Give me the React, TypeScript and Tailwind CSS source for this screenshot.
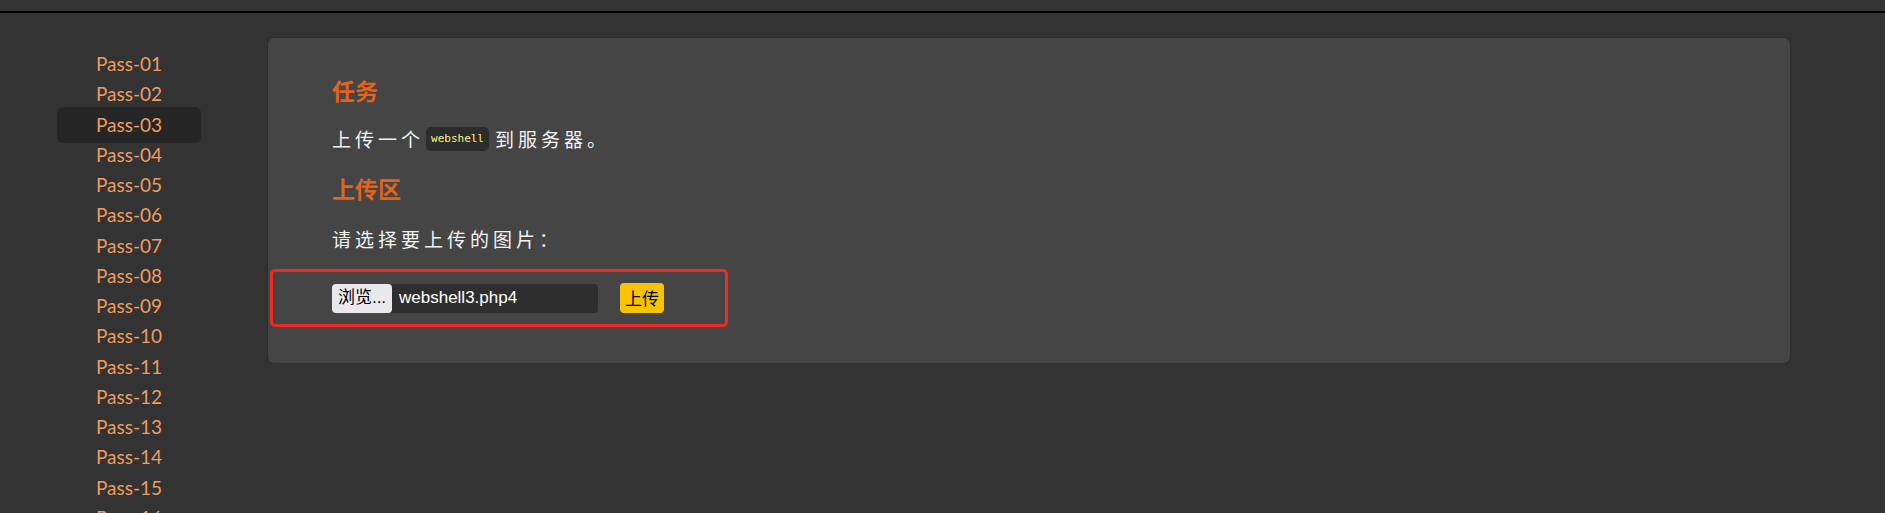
import React from "react";

const passes = Array.from({ length: 21 }, (_, i) => `Pass-${String(i + 1).padStart(2, "0")}`);

const cjk = "font-['Noto_Sans_CJK_SC',sans-serif]";

const App: React.FC = () => {
  return (
    <div className="h-[513px] overflow-hidden bg-[#333333]">
      <div className="h-[13px] border-b-2 border-black bg-[#343434]" />
      <div className="flex items-start">
        {/* sidebar */}
        <ul className="ml-[57px] mt-[36px] w-[144px] font-['Lato',sans-serif] text-[19px]">
          {passes.map((p) => {
            const active = p === "Pass-03";
            return (
              <li
                key={p}
                className={
                  active
                    ? "-my-[3px] rounded-md bg-[#262626] py-[3px] pl-[39px] leading-[30.25px] text-[#ee9c60]"
                    : "pl-[39px] leading-[30.25px] text-[#ee9c60]"
                }
              >
                {p}
              </li>
            );
          })}
        </ul>

        {/* content card */}
        <div className="ml-[67px] mt-[25px] w-[1522px] rounded-md bg-[#454545] pb-[36px] pt-[37px] shadow-[0_0_2px_rgba(0,0,0,0.4)]">
          <h2 className={`pl-[64px] text-[23px] font-bold leading-[30px] text-[#e3631a] ${cjk}`}>任务</h2>
          <p className={`mt-[19px] flex items-center pl-[64px] text-[19px] leading-[30px] tracking-[4px] text-[#f2f2f2] ${cjk}`}>
            上传一个
            <code className="ml-[2px] mr-[6px] rounded-[5px] bg-[#2c2c2c] px-[5px] py-[3px] font-['DejaVu_Sans_Mono',monospace] text-[11px] font-normal leading-[18px] tracking-normal text-[#f7f77e]">
              webshell
            </code>
            到服务器。
          </p>
          <h2 className={`mt-[19px] pl-[64px] text-[23px] font-bold leading-[30px] text-[#e3631a] ${cjk}`}>上传区</h2>
          <p className={`mt-[21px] pl-[64px] text-[19px] leading-[30px] tracking-[4px] text-[#f2f2f2] ${cjk}`}>
            请选择要上传的图片：
          </p>
          <div className="ml-[2px] mt-[15px] flex h-[58px] w-[458px] items-center rounded-[5px] border-[3px] border-[#ee2a22] pl-[59px]">
            <div className="flex h-[29px] w-[266px] items-stretch rounded-[4px] bg-[#2e2e2e]">
              <span className="flex w-[60px] items-center justify-center rounded-[4px] bg-[#e9e9ed] font-['Liberation_Sans','Noto_Sans_CJK_SC',sans-serif] text-[17px] text-black">
                浏览...
              </span>
              <span className="flex items-center pl-[7px] font-['Liberation_Sans',sans-serif] text-[17px] text-white">
                webshell3.php4
              </span>
            </div>
            <button
              type="button"
              className={`ml-[22px] flex h-[30px] w-[44px] items-center justify-center rounded-[4px] bg-[#f8c400] text-[17px] text-black ${cjk}`}
            >
              上传
            </button>
          </div>
        </div>
      </div>
    </div>
  );
};

export default App;
